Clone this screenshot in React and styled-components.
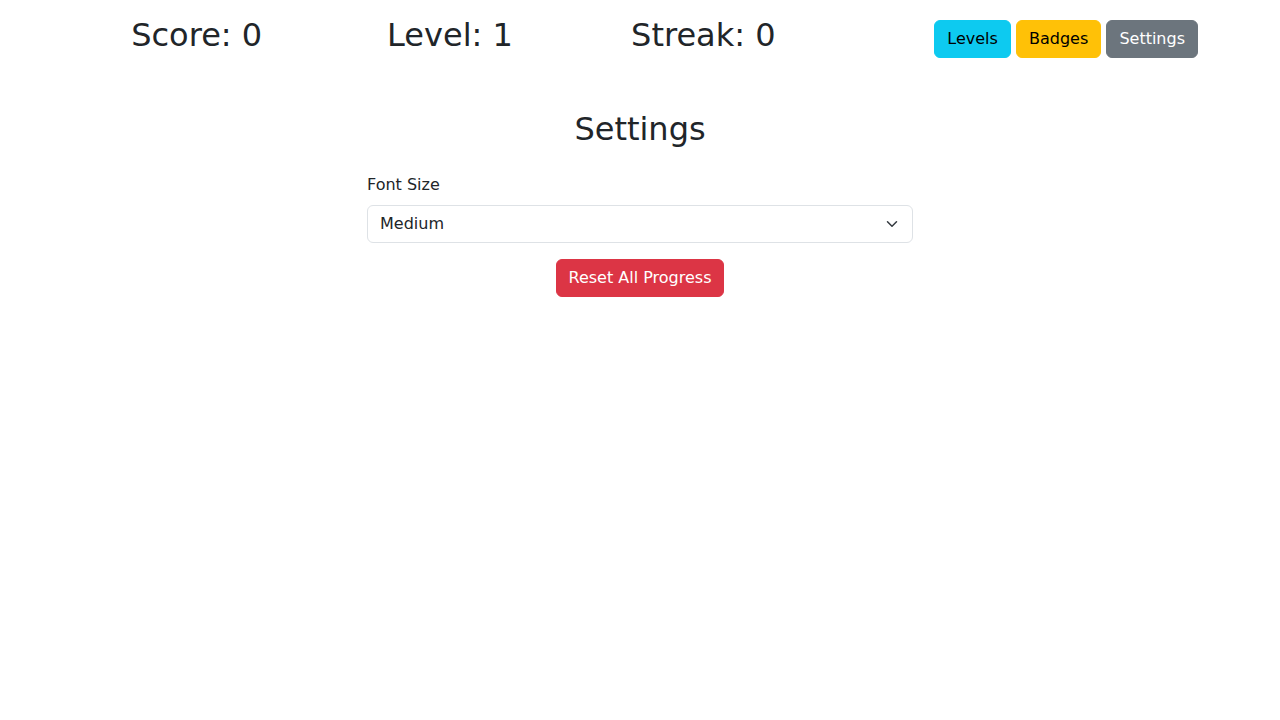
import React from 'react'
import styled, { createGlobalStyle } from 'styled-components'

const GlobalStyle = createGlobalStyle`
  * {
    box-sizing: border-box;
  }

  body {
    margin: 0;
    background: #fff;
    color: #212529;
    font-family: "DejaVu Sans", "Liberation Sans", sans-serif;
    font-size: 16px;
    line-height: 1.5;
  }
`

const Container = styled.div`
  width: 1140px;
  margin: 0 auto;
  padding: 16px 12px 0;
`

const HeaderRow = styled.div`
  display: flex;
  align-items: flex-start;
`

const StatsRow = styled.div`
  display: grid;
  grid-template-columns: repeat(3, 1fr);
  width: 760px;
  margin-left: -12px;
`

const Stat = styled.h2`
  margin: 0 0 8px;
  font-size: 32px;
  font-weight: 500;
  line-height: 1.2;
  text-align: center;
`

const NavButtons = styled.div`
  flex: 1;
  text-align: right;
  padding-top: 4px;
`

const variants = {
  info: { bg: '#0dcaf0', fg: '#000' },
  warning: { bg: '#ffc107', fg: '#000' },
  secondary: { bg: '#6c757d', fg: '#fff' },
  danger: { bg: '#dc3545', fg: '#fff' },
}

const Button = styled.button`
  display: inline-block;
  vertical-align: middle;
  font-family: inherit;
  font-size: 16px;
  line-height: 24px;
  padding: 6px 12px;
  border: 1px solid ${p => variants[p.$variant].bg};
  border-radius: 6px;
  background-color: ${p => variants[p.$variant].bg};
  color: ${p => variants[p.$variant].fg};
  cursor: pointer;
`

const Panel = styled.section`
  width: 546px;
  margin: 48px auto 0;
  display: flex;
  flex-direction: column;
`

const Title = styled.h2`
  margin: 0 0 24px;
  font-size: 32px;
  font-weight: 500;
  line-height: 1.2;
  text-align: center;
`

const Label = styled.label`
  display: block;
  margin-bottom: 8px;
`

const SelectBox = styled.div`
  display: flex;
  align-items: center;
  justify-content: space-between;
  height: 38px;
  padding: 6px 12px;
  border: 1px solid #dee2e6;
  border-radius: 6px;
  margin-bottom: 16px;
  cursor: pointer;
`

const ResetWrap = styled.div`
  display: flex;
  justify-content: center;
`

const Chevron = () => (
  <svg width="16" height="12" viewBox="0 0 16 16" preserveAspectRatio="xMidYMid meet">
    <path d="m2 5 6 6 6-6" fill="none" stroke="#343a40" strokeWidth="2" strokeLinecap="round" strokeLinejoin="round" />
  </svg>
)

const App = () => {
  return (
    <>
      <GlobalStyle />
      <Container>
        <HeaderRow>
          <StatsRow>
            <Stat>Score: 0</Stat>
            <Stat>Level: 1</Stat>
            <Stat>Streak: 0</Stat>
          </StatsRow>
          <NavButtons>
            <Button $variant="info">Levels</Button>{' '}
            <Button $variant="warning">Badges</Button>{' '}
            <Button $variant="secondary">Settings</Button>
          </NavButtons>
        </HeaderRow>
        <Panel>
          <Title>Settings</Title>
          <Label>Font Size</Label>
          <SelectBox>
            <span>Medium</span>
            <Chevron />
          </SelectBox>
          <ResetWrap>
            <Button $variant="danger">Reset All Progress</Button>
          </ResetWrap>
        </Panel>
      </Container>
    </>
  )
}

export default App
